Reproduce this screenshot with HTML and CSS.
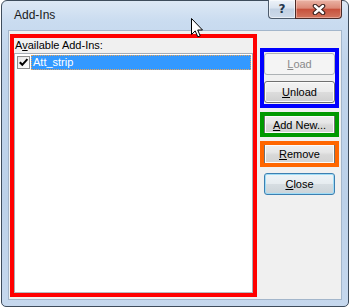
FILE: index.html
```html
<!DOCTYPE html>
<html>
<head>
<meta charset="utf-8">
<link rel="stylesheet" href="styles.css">
</head>
<body>
<div class="window">
  <div class="titlebar"><span class="title">Add-Ins</span></div>
  <div class="caption-btns">
    <div class="cap help">?</div>
    <div class="cap close">
      <svg width="14" height="11" viewBox="0 0 14 11">
        <path d="M3 2 L11 9 M11 2 L3 9" stroke="#3b2320" stroke-width="4.6" stroke-linecap="round"/>
        <path d="M3 2 L11 9 M11 2 L3 9" stroke="#ffffff" stroke-width="2.4" stroke-linecap="round"/>
      </svg>
    </div>
  </div>
  <div class="client">
    <div class="left-box">
      <div class="label">A<u>v</u>ailable Add-Ins:</div>
      <div class="list">
        <div class="row">
          <div class="check">
            <svg width="11" height="11" viewBox="0 0 11 11"><path d="M1.8 5.2 L4.3 7.8 L9.4 2.2" fill="none" stroke="#000" stroke-width="2"/></svg>
          </div>
          <div class="item">Att_strip</div>
        </div>
      </div>
    </div>
    <div class="right-col">
      <div class="box blue">
        <div class="btn disabled"><u>L</u>oad</div>
        <div class="btn"><u>U</u>nload</div>
      </div>
      <div class="box green">
        <div class="btn flat"><u>A</u>dd New...</div>
      </div>
      <div class="box orange">
        <div class="btn flat"><u>R</u>emove</div>
      </div>
      <div class="btn default"><u>C</u>lose</div>
    </div>
  </div>
  <svg class="cursor" width="13" height="20" viewBox="0 0 13 20">
    <path d="M0.5 0.5 L0.5 16.5 L4.2 12.9 L6.8 18.8 L9.2 17.8 L6.7 12 L11.5 12 Z" fill="#fff" stroke="#000" stroke-width="1"/>
  </svg>
</div>
</body>
</html>
```
FILE: styles.css
```css
html, body {
  margin: 0;
  padding: 0;
}
body {
  width: 350px;
  height: 308px;
  background: #ffffff;
  font-family: "Liberation Sans", Arial, sans-serif;
  font-size: 11px;
  color: #000;
  overflow: hidden;
}
.window {
  position: relative;
  box-sizing: border-box;
  margin-left: 1px;
  width: 348px;
  height: 307px;
  border: 1px solid #3e4c5c;
  border-radius: 6px 6px 5px 5px;
  padding: 0 6px 6px 6px;
  background: linear-gradient(180deg, #dde8f5 0px, #cadcf0 20px, #c0d4eb 60px, #bcd1e9 200px, #c6d8ee 307px);
  display: flex;
  flex-direction: column;
}
.titlebar {
  height: 29px;
  box-sizing: border-box;
  padding: 7px 0 0 6px;
  flex: none;
}
.title {
  font-size: 12px;
  line-height: 14px;
  color: #1a1a1a;
}
.caption-btns {
  position: absolute;
  top: -1px;
  right: 6px;
  display: flex;
}
.cap {
  height: 19px;
  box-sizing: border-box;
  display: flex;
  align-items: center;
  justify-content: center;
}
.help {
  width: 27px;
  border: 1px solid #4d5b6c;
  border-top: none;
  border-right: none;
  border-radius: 0 0 0 4px;
  background: linear-gradient(180deg, #eef3f9 0%, #d9e3ef 45%, #c2d1e3 50%, #cddaea 100%);
  box-shadow: inset 0 0 0 1px rgba(255,255,255,0.55);
  color: #24364c;
  font-family: "DejaVu Sans", sans-serif;
  font-weight: bold;
  font-size: 12px;
}
.close {
  width: 47px;
  border: 1px solid #4a2b28;
  border-top: none;
  border-radius: 0 0 4px 0;
  background: linear-gradient(180deg, #eab4a6 0%, #dc8a78 45%, #c7513c 52%, #d2765f 100%);
  box-shadow: inset 0 0 0 1px rgba(255,220,210,0.45);
}
.client {
  flex: 1;
  box-sizing: border-box;
  border: 1px solid #a3b6cb;
  background: #f0f0f0;
  padding: 3px 2px 2px 1px;
  display: flex;
  gap: 3px;
}
.left-box {
  box-sizing: border-box;
  width: 247px;
  height: 263px;
  border: 4px solid #ff0000;
  display: flex;
  flex-direction: column;
}
.label {
  height: 15px;
  box-sizing: border-box;
  line-height: 11px;
  padding: 2px 0 0 1px;
  flex: none;
}
.list {
  flex: 1;
  background: #ffffff;
  border: 1px solid #a7adb5;
  border-bottom-color: #b8bcc2;
}
.row {
  display: flex;
  align-items: center;
  margin: 1px 1px 0 2px;
}
.check {
  width: 13px;
  height: 13px;
  box-sizing: border-box;
  border: 1px solid #8e8f8f;
  background: linear-gradient(135deg, #e6e6e6 0%, #ffffff 100%);
  margin-right: 1px;
  display: flex;
  align-items: center;
  justify-content: center;
}
.item {
  flex: 1;
  height: 15px;
  box-sizing: border-box;
  background: #3399ff;
  border: 1px dotted #e9a55a;
  color: #ffffff;
  line-height: 13px;
  padding-left: 1px;
  font-size: 11px;
}
.right-col {
  width: 79px;
  padding-top: 14px;
  display: flex;
  flex-direction: column;
  align-items: flex-start;
}
.box {
  box-sizing: border-box;
  width: 79px;
  border: 4px solid;
}
.blue {
  border-color: #0000ff;
  padding: 1px 0;
  display: flex;
  flex-direction: column;
  gap: 6px;
}
.green {
  border-color: #009900;
  margin-top: 4px;
  height: 25px;
  display: flex;
}
.orange {
  border-color: #ff6600;
  margin-top: 4px;
  height: 26px;
  display: flex;
}
.btn {
  box-sizing: border-box;
  width: 71px;
  height: 22px;
  border: 1px solid #707070;
  border-radius: 3px;
  background: linear-gradient(180deg, #f3f3f3 0%, #ebebeb 48%, #dcdcdc 52%, #cfcfcf 100%);
  box-shadow: inset 0 0 0 1px #fbfbfb;
  display: flex;
  align-items: center;
  justify-content: center;
  color: #000;
}
.btn.disabled {
  border-color: #adb2b5;
  background: #f4f4f4;
  box-shadow: none;
  color: #8a8a8a;
}
.btn.flat {
  height: auto;
  flex: 1;
  border-top: none;
  border-bottom: none;
  border-radius: 0;
  background: linear-gradient(180deg, #eeeeee 0%, #e6e6e6 40%, #d8d8d8 55%, #d2d2d2 100%);
}
.btn.default {
  margin-top: 6px;
  margin-left: 4px;
  border-color: #3c7fb1;
  box-shadow: inset 0 0 0 1px #9fdcf6;
  background: linear-gradient(180deg, #eef4f8 0%, #e6ecf0 48%, #d6dde2 52%, #cbd3d8 100%);
}
.blue .btn {
  flex: none;
}
.cursor {
  position: absolute;
  left: 189px;
  top: 17px;
}
```
